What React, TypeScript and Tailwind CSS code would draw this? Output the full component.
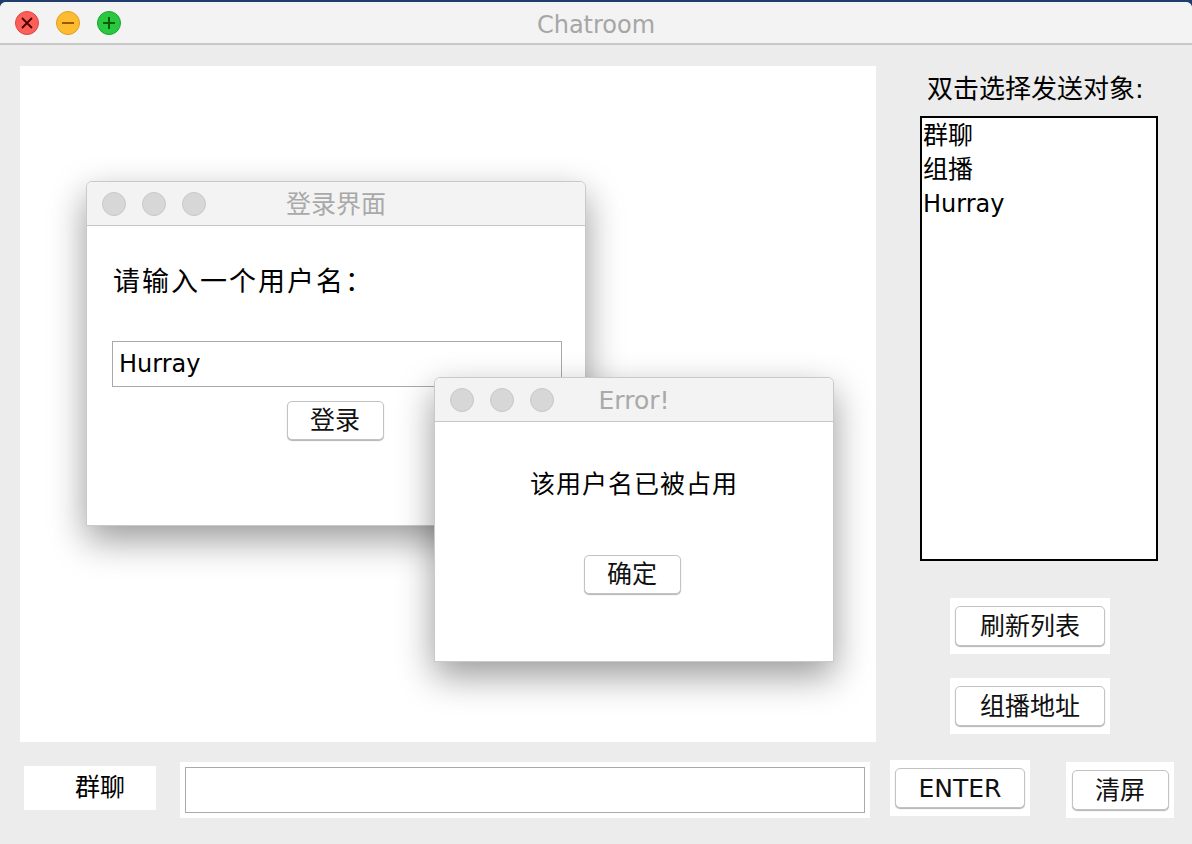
import React from "react";

const FONT = { fontFamily: '"DejaVu Sans", "Noto Sans CJK SC", sans-serif' };

function Light({ color, border, children }: { color: string; border: string; children?: React.ReactNode }) {
  return (
    <div
      className="w-[24px] h-[24px] rounded-full border flex items-center justify-center"
      style={{ background: color, borderColor: border }}
    >
      {children}
    </div>
  );
}

function GrayDots() {
  return (
    <div className="flex gap-[16px]">
      <div className="w-[24px] h-[24px] rounded-full bg-[#d7d7d7] border border-[#c8c8c8]" />
      <div className="w-[24px] h-[24px] rounded-full bg-[#d7d7d7] border border-[#c8c8c8]" />
      <div className="w-[24px] h-[24px] rounded-full bg-[#d7d7d7] border border-[#c8c8c8]" />
    </div>
  );
}

function MacButton({ label, className }: { label: string; className: string }) {
  return (
    <button
      className={
        "bg-white rounded-[5px] border border-[#c3c3c3] shadow-[0_1px_1px_rgba(0,0,0,0.3)] text-[25px] text-[#111] flex items-center justify-center leading-none " +
        className
      }
    >
      {label}
    </button>
  );
}

function Dialog({ title, className, children }: { title: string; className: string; children: React.ReactNode }) {
  return (
    <div
      className={
        "absolute bg-white rounded-t-[6px] border border-[#c9c9c9] shadow-[0_14px_36px_rgba(0,0,0,0.4)] flex flex-col " +
        className
      }
    >
      <div className="relative h-[44px] bg-[#f3f3f3] border-b border-[#c6c6c6] rounded-t-[6px] flex items-center pl-[15px] shrink-0">
        <GrayDots />
        <div className="absolute inset-0 pt-[3px] flex items-center justify-center text-[25px] text-[#a9a9a9]">
          {title}
        </div>
      </div>
      <div className="flex-1 relative">{children}</div>
    </div>
  );
}

export default function App() {
  return (
    <div className="w-[1192px] h-[844px] bg-[#1f3c6c] pt-[2px] overflow-hidden" style={FONT}>
      <div className="h-[842px] bg-[#ececec] rounded-t-[6px] flex flex-col">
        {/* title bar */}
        <div className="relative h-[43px] bg-[#f3f3f3] rounded-t-[6px] border-b-2 border-[#c8c8c8] flex items-center pl-[15px] gap-[17px]">
          <Light color="#fc5f57" border="#de4640">
            <svg width="16" height="16" viewBox="0 0 16 16">
              <path d="M3 3 L13 13 M13 3 L3 13" stroke="#4c0000" strokeWidth="1.8" />
            </svg>
          </Light>
          <Light color="#fdbb2f" border="#de9f20">
            <svg width="16" height="16" viewBox="0 0 16 16">
              <path d="M2 8 H14" stroke="#985700" strokeWidth="2" />
            </svg>
          </Light>
          <Light color="#28c840" border="#1aa62c">
            <svg width="16" height="16" viewBox="0 0 16 16">
              <path d="M2 8 H14 M8 2 V14" stroke="#0a5e00" strokeWidth="2" />
            </svg>
          </Light>
          <div className="absolute inset-0 pt-[4px] flex items-center justify-center text-[24px] text-[#a6a6a6] pointer-events-none">
            Chatroom
          </div>
        </div>

        {/* main area */}
        <div className="flex">
          <div className="relative ml-[20px] mt-[21px] w-[856px] h-[676px] bg-white">
            <Dialog title="登录界面" className="left-[66px] top-[115px] w-[500px] h-[345px]">
              <div className="pl-[26px] pt-[42px] text-[27px] tracking-[2px] text-black leading-none">
                请输入一个用户名：
              </div>
              <div className="ml-[25px] mt-[46px] w-[450px] h-[46px] border border-[#a9a9a9] flex items-center pl-[6px] text-[24px] text-black">
                Hurray
              </div>
              <div className="flex justify-center mt-[14px] pr-[2px]">
                <MacButton label="登录" className="w-[97px] h-[39px]" />
              </div>
            </Dialog>
            <Dialog title="Error!" className="left-[414px] top-[311px] w-[400px] h-[285px]">
              <div className="text-center pt-[50px] text-[25px] tracking-[1px] text-black leading-none">
                该用户名已被占用
              </div>
              <div className="flex justify-center mt-[58px] pr-[4px]">
                <MacButton label="确定" className="w-[97px] h-[39px]" />
              </div>
            </Dialog>
          </div>

          <div className="flex flex-col w-[316px]">
            <div className="mt-[27px] pl-[51px] h-[34px] leading-[34px] text-[26px] text-black">
              双击选择发送对象:
            </div>
            <div className="ml-[44px] mt-[10px] w-[238px] h-[445px] bg-white border-2 border-black pl-[1px] pt-[1px] text-[24px] leading-[34px] text-black">
              <div className="text-[25px]">群聊</div>
              <div className="text-[25px]">组播</div>
              <div>Hurray</div>
            </div>
            <div className="ml-[74px] mt-[37px] w-[160px] h-[56px] bg-white flex items-center justify-center">
              <MacButton label="刷新列表" className="w-[150px] h-[40px]" />
            </div>
            <div className="ml-[74px] mt-[24px] w-[160px] h-[56px] bg-white flex items-center justify-center">
              <MacButton label="组播地址" className="w-[150px] h-[40px]" />
            </div>
          </div>
        </div>

        {/* bottom row */}
        <div className="flex items-start mt-[18px]">
          <div className="ml-[24px] mt-[6px] w-[132px] h-[44px] bg-white flex items-center justify-center text-[25px] text-black pl-[20px]">
            群聊
          </div>
          <div className="ml-[24px] mt-[2px] w-[690px] h-[56px] bg-white flex items-center justify-center">
            <div className="w-[680px] h-[46px] border border-[#aaaaaa] bg-white" />
          </div>
          <div className="ml-[20px] w-[140px] h-[56px] bg-white flex items-center justify-center">
            <MacButton label="ENTER" className="w-[130px] h-[40px] text-[24px]" />
          </div>
          <div className="ml-[36px] mt-[2px] w-[108px] h-[56px] bg-white flex items-center justify-center">
            <MacButton label="清屏" className="w-[97px] h-[40px]" />
          </div>
        </div>
      </div>
    </div>
  );
}
